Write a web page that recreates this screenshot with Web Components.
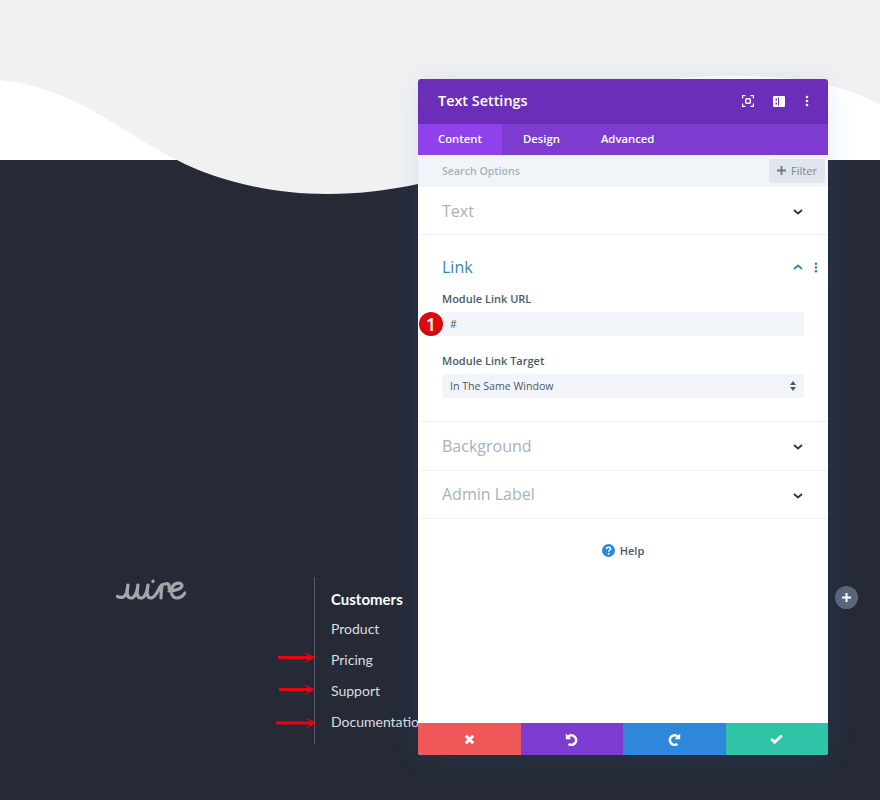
<!DOCTYPE html>
<html><head><meta charset="utf-8">
<style>
html,body{margin:0;padding:0}
body{width:880px;height:800px;overflow:hidden;font-family:"Open Sans",sans-serif}
</style></head>
<body>
<template id="t-page"><style>
:host{display:flex;flex-direction:column;position:relative;width:880px;height:800px;background:#262a37;overflow:hidden}
.hero{height:160px;flex:none;background:#fff;position:relative}
svg.wave{position:absolute;left:0;top:0}
</style>
<div class="hero"><svg class="wave" width="880" height="200" viewBox="0 0 880 200"><path fill="#f1f1f2" d="M0 0H880V104C862 96 846 89 828 85C790 76 740 74 690 77C640 82 560 120 418 184C390 190 360 194 327 194C270 194 215 180 177 160C155 149 130 133 100 115C75 100 40 84 0 80Z"/></svg></div>
<slot></slot></template>

<template id="t-footer"><style>
:host{display:flex;flex:none;position:relative;margin:417px 0 0 116px;width:320px;height:167px}
.logo{width:198px;flex:none}
.col{border-left:1px solid #585b64;padding:10px 0 0 16px;font:400 14px/31px Lato,"Open Sans",sans-serif;color:#dcdde0;white-space:nowrap}
.h{font-weight:700;font-size:15px;color:#fff;line-height:22px;margin:1px 0 3px}
svg{display:block}
svg.ar{position:absolute;left:0;top:0;overflow:visible}
</style><div class="logo"><svg width="70" height="24" viewBox="0 0 70 24" fill="none" stroke="#a5a6a9" stroke-width="3.200" stroke-linecap="round" stroke-linejoin="round"><path d="M1.500 19.500C6 21.500 9 20 10.500 16L12 8C11 14 10 21 15 21C19 21 21 15 22 8C21 14 20 21 25 21C29 21 31 15 32 8C31 14 30 21 35 21C38 21 41 16 43 12M37 4V4.500M43 12C44 9 46 7 49 7C52 6 54 8 53 11M46 9C45 14 45 17 45 21M53 14C58 14 66 12 66 8.500C66 5 58 5 56 11C54 17 57 21 61 21C64 21 67 19 69 16"/></svg></div>
<div class="col"><div class="h">Customers</div><div>Product</div><div>Pricing</div><div>Support</div><div>Documentation</div></div>
<svg class="ar" width="1" height="1" fill="#e30613"><g transform="translate(-116 -577)"><path d="M278 656H308L304 652L316 657.500L304 663L308 659H278Z"/><path d="M279 688H308L304 684L315 689.500L304 695L308 691H279Z"/><path d="M276 721.500H310L306 717.500L317 723L306 728.500L310 724.500H276Z"/></g></svg></template>

<template id="t-modal"><style>
:host{position:absolute;left:418px;top:79px;width:410px;height:676px;display:flex;flex-direction:column;background:#fff;border-radius:3px;box-shadow:0 0 30px rgba(43,135,218,.12);font-family:"Open Sans",sans-serif}
.head{height:45px;box-sizing:border-box;flex:none;background:#6c2eb9;border-radius:3px 3px 0 0;display:flex;align-items:center;padding:0 19px 0 20px;color:#fff}
.head b{font-size:14.4px;font-weight:600;flex:1;margin-bottom:2px}
.head .ic{display:flex;align-items:center;gap:20px;margin-top:-1px}
.head svg{display:block}
.tabs{height:31px;flex:none;background:#7e3bd0;display:flex;color:#fff;font-size:11.3px;font-weight:600}
.tab{display:flex;align-items:center;padding:0 20px 2px 21px}
.tab.on{background:#8f42ec;box-sizing:border-box;width:84px;padding:0 0 2px 20px}
.search{height:32px;flex:none;background:#f1f5f9;display:flex;align-items:center;justify-content:space-between;padding:0 3px 0 24px;font-size:10.6px;font-weight:600;color:#a6b1bd}
.search>span{margin-bottom:0}
.filter{width:56px;height:24px;background:#e1e6ec;border-radius:3px;color:#7b8794;display:flex;align-items:center;justify-content:center;gap:5px;font-size:11px;font-weight:500}
.filter span{margin-bottom:2px}
.body{flex:1;display:flex;flex-direction:column}
.foot{height:32px;flex:none;display:flex;border-radius:0 0 3px 3px;overflow:hidden}
.foot div{flex:1;display:flex;align-items:center;justify-content:center}
.help{display:flex;align-items:center;justify-content:center;gap:5px;height:18px;margin-top:22px;font-size:11px;font-weight:600;color:#4c5866}
</style>
<div class="head"><b>Text Settings</b><div class="ic">
<svg width="12" height="12" viewBox="0 0 12 12" fill="none" stroke="#fff" stroke-width="1.200"><path d="M.6 3.500V.6H3.500M8.500 .6H11.400V3.500M11.400 8.500V11.400H8.500M3.500 11.400H.6V8.500"/><rect x="3.700" y="3.700" width="4.600" height="4.600" rx="1" stroke-width="1.500"/></svg>
<svg width="12" height="11" viewBox="0 0 12 11" style="margin-left:-1px"><path fill="#fff" fill-rule="evenodd" d="M1 0H11A1 1 0 0 1 12 1V10A1 1 0 0 1 11 11H1A1 1 0 0 1 0 10V1A1 1 0 0 1 1 0ZM5 1.500V9.500H6V1.500ZM2.500 2.500V4.500H4V2.500ZM2.500 6.500V8.500H4V6.500Z"/></svg>
<svg width="4" height="12" viewBox="0 0 4 12" fill="#fff"><circle cx="2" cy="2" r="1.300"/><circle cx="2" cy="6" r="1.300"/><circle cx="2" cy="10" r="1.300"/></svg>
</div></div>
<div class="tabs"><div class="tab on">Content</div><div class="tab">Design</div><div class="tab">Advanced</div></div>
<div class="search"><span>Search Options</span><div class="filter"><svg width="9" height="9" viewBox="0 0 9 9" style="display:block;margin-bottom:1px"><path d="M4.500 0V9M0 4.500H9" stroke="#6e7a87" stroke-width="1.800"/></svg><span>Filter</span></div></div>
<div class="body"><slot></slot>
<div class="help"><svg width="13" height="13" viewBox="0 0 13 13"><circle cx="6.500" cy="6.500" r="6.500" fill="#2b87da"/><path d="M4.500 5C4.500 3.800 5.400 3.200 6.500 3.200C7.700 3.200 8.500 3.900 8.500 4.900C8.500 6.300 6.600 6.200 6.600 7.700" fill="none" stroke="#fff" stroke-width="1.500"/><circle cx="6.600" cy="9.700" r="1" fill="#fff"/></svg><span>Help</span></div></div>
<div class="foot">
<div style="background:#ef5858"><svg width="11" height="11" viewBox="0 0 11 11"><path d="M1.800 1.800L9.200 9.200M9.200 1.800L1.800 9.200" stroke="#fff" stroke-width="3" fill="none"/></svg></div>
<div style="background:#7e3bd0"><svg width="13" height="13" viewBox="0 0 13 13" fill="none" stroke="#fff" stroke-width="2.600"><path d="M3 3.600A4.800 4.800 0 1 1 3.500 11"/><path d="M.8 .6V6.200H6.400" stroke="none" fill="#fff"/></svg></div>
<div style="background:#2e87da"><svg width="13" height="13" viewBox="0 0 13 13" fill="none" stroke="#fff" stroke-width="2.600"><path d="M10 3.600A4.800 4.800 0 1 0 9.500 11"/><path d="M12.200 .6V6.200H6.600" stroke="none" fill="#fff"/></svg></div>
<div style="background:#2fc3a7"><svg width="13" height="10" viewBox="0 0 13 10" fill="none" stroke="#fff" stroke-width="2.800"><path d="M1.200 5L4.700 8.200L11.800 1.500"/></svg></div>
</div></template>

<template id="t-sec"><style>
:host{display:block;border-bottom:1px solid #f0f3f6;padding:0 24px}
.row{display:flex;align-items:center;justify-content:space-between;height:var(--h,47px);font-size:16px;color:#a8b1bc}
#l{margin-top:var(--t,0)}
:host([open]) .row{color:#3b83b0;height:50px;margin-top:7px}
:host([open]){padding-bottom:5px}
svg{display:block}
.r{display:flex;align-items:center;gap:11px;margin-right:1px;padding-top:2px}
:host([open]) .r{margin-right:-14px;padding-top:0}
</style><div class="row"><span id="l"></span><div class="r" id="r"></div></div><slot></slot></template>

<template id="t-field"><style>
:host{display:block;position:relative;margin-bottom:18px}
label{display:block;font-size:11px;font-weight:600;color:#4c5866;line-height:13px;margin-bottom:7px}
.in{height:24px;box-sizing:border-box;background:#f1f5f9;border-radius:3px;display:flex;align-items:center;justify-content:space-between;padding:0 8px;font-size:10.6px;font-weight:500;color:#4c5866}
</style><label id="l"></label><div class="in"><span id="v"></span><slot></slot></div></template>

<template id="t-badge"><style>
:host{position:absolute;left:-23px;top:20px;width:24px;height:24px;border-radius:50%;background:radial-gradient(circle at 50% 40%,#dc0a12 55%,#b4000a 100%);color:#fff;font:600 18px/24px "Open Sans",sans-serif;text-align:center;display:block}
</style>1</template>

<template id="t-add"><style>
:host{position:absolute;left:835px;top:586px;width:23px;height:23px;border-radius:50%;background:#5a667a;display:flex;align-items:center;justify-content:center}
</style><svg width="9" height="9" viewBox="0 0 9 9"><path d="M4.500 0V9M0 4.500H9" stroke="#fff" stroke-width="2"/></svg></template>

<page-shell>
<site-footer></site-footer>
<add-button></add-button>
<settings-modal>
<option-section label="Text"></option-section>
<option-section label="Link" open>
<option-field label="Module Link URL" value="#"><step-badge></step-badge></option-field>
<option-field label="Module Link Target" value="In The Same Window"><svg width="6" height="10" viewBox="0 0 6 10" fill="#4c5866" style="display:block"><path d="M3 0L6 4H0ZM3 10L0 6H6Z"/></svg></option-field>
</option-section>
<option-section label="Background" style="--h:48px"></option-section>
<option-section label="Admin Label" style="--t:-2px"></option-section>
</settings-modal>
</page-shell>

<script>
const chev=(up,c)=>`<svg width="10" height="6" viewBox="0 0 10 6" fill="none" stroke="${c}" stroke-width="1.800"><path d="${up?'M1 5L5 1.500L9 5':'M1 1L5 4.500L9 1'}"/></svg>`;
function def(name,tid,init){customElements.define(name,class extends HTMLElement{
constructor(){super();const s=this.attachShadow({mode:'open'});s.appendChild(document.getElementById(tid).content.cloneNode(true));}
connectedCallback(){if(init)init(this,this.shadowRoot);}
});}
def('page-shell','t-page');
def('site-footer','t-footer');
def('settings-modal','t-modal');
def('step-badge','t-badge');
def('add-button','t-add');
def('option-section','t-sec',(h,s)=>{s.getElementById('l').textContent=h.getAttribute('label');const o=h.hasAttribute('open');
s.getElementById('r').innerHTML=chev(o,o?'#3b83b0':'#2f3440')+(o?'<svg width="4" height="11" viewBox="0 0 4 11" fill="#3b83b0"><circle cx="2" cy="1.700" r="1.300"/><circle cx="2" cy="5.500" r="1.300"/><circle cx="2" cy="9.300" r="1.300"/></svg>':'');});
def('option-field','t-field',(h,s)=>{s.getElementById('l').textContent=h.getAttribute('label');s.getElementById('v').textContent=h.getAttribute('value');});
</script>
</body>
</html>
